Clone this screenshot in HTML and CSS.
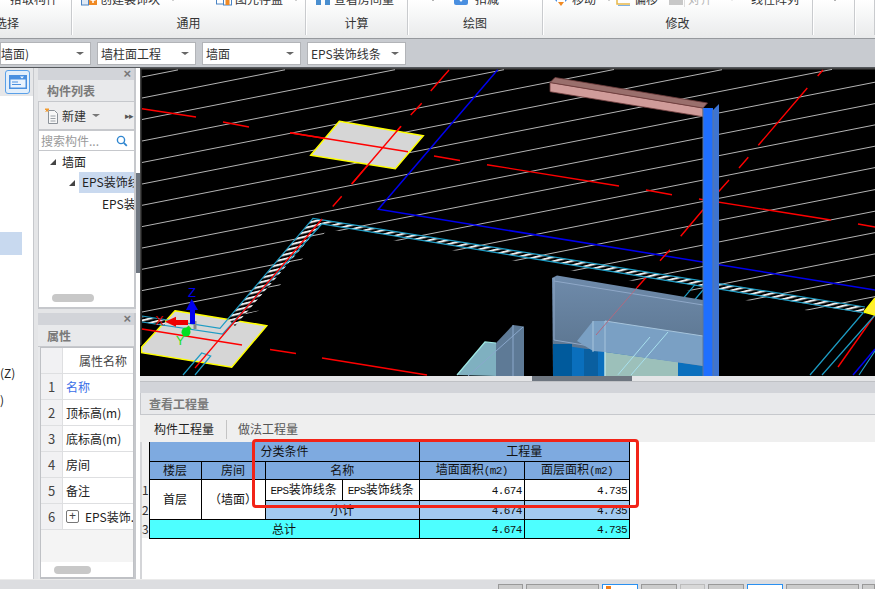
FILE: index.html
```html
<!DOCTYPE html>
<html lang="zh">
<head>
<meta charset="utf-8">
<title>查看工程量</title>
<link rel="stylesheet" href="styles.css">
</head>
<body>
<header class="ribbon">
  <section class="group g-select">
    <div class="items"><span class="item pad-10">拾取构件</span></div>
    <div class="label label-select">选择</div>
  </section>
  <section class="group g-common">
    <div class="items">
      <span class="item w-135">
        <svg class="ico" viewBox="0 0 16 16"><rect x="0.5" y="4" width="7" height="10" fill="#dfe9f5" stroke="#4a84c4"/><rect x="8" y="4" width="8" height="10" fill="#f08a24"/><path d="M12 6v6M9.500 9h5" stroke="#fff" stroke-width="1.500"/></svg>创建装饰块<i class="tiny"></i>
      </span>
      <span class="item">
        <svg class="ico" viewBox="0 0 16 16"><rect x="0.500" y="4" width="8" height="9" fill="#fff" stroke="#4a84c4"/><rect x="7.500" y="3" width="8" height="11" fill="#fff" stroke="#4a84c4"/><rect x="9.500" y="9" width="4" height="5" fill="#f08a24"/></svg>图元存盘<i class="tiny"></i>
      </span>
    </div>
    <div class="label">通用</div>
  </section>
  <section class="group g-calc">
    <div class="items">
      <span class="item">
        <svg class="ico" viewBox="0 0 16 16"><path d="M1 2h14v12h-5v-5H6v5H1z" fill="#4a8fd0"/></svg>查看房间量
      </span>
    </div>
    <div class="label">计算</div>
  </section>
  <section class="group g-draw">
    <div class="items">
      <i class="tiny tiny-draw"></i>
      <span class="item">
        <svg class="ico ico-wide" viewBox="0 0 14 16"><rect x="0" y="0" width="14" height="14" rx="2" fill="#4a8fe0"/><path d="M3 6h8l-4 5z" fill="#fff"/></svg>扣减
      </span>
    </div>
    <div class="label">绘图</div>
  </section>
  <section class="group g-modify">
    <div class="items">
      <span class="item w-62">
        <svg class="ico" viewBox="0 0 16 16"><path d="M1 8l3-3v6zM15 8l-3-3v6z" fill="#4a8fe0"/><path d="M8 15l-3-4h6z" fill="#f08a24"/></svg>移动<i class="tiny"></i>
      </span>
      <span class="item w-54">
        <svg class="ico" viewBox="0 0 16 16"><path d="M2 3v10h13" fill="none" stroke="#e8b84a" stroke-width="1.500"/><path d="M3 14.500h12" stroke="#7fb0e0"/></svg>偏移
      </span>
      <span class="item w-82 off">
        <svg class="ico" viewBox="0 0 16 16"><rect x="0" y="3" width="14" height="11" fill="#c8c8c8"/><path d="M15.500 0v16" stroke="#ddd"/></svg>对齐<i class="tiny tiny-off"></i>
      </span>
      <span class="item">线性阵列</span>
    </div>
    <div class="label">修改</div>
  </section>
  <section class="group g-more">
    <div class="items"><i class="tiny tiny-more"></i></div>
  </section>
  <section class="group g-tail"></section>
</header>

<div class="combobar">
  <div class="combo c-first"><span>墙面)</span><i class="caret"></i></div>
  <div class="combo"><span>墙柱面工程</span><i class="caret"></i></div>
  <div class="combo"><span>墙面</span><i class="caret"></i></div>
  <div class="combo"><span>EPS装饰线条</span><i class="caret"></i></div>
</div>

<main class="workspace">
  <aside class="strip">
    <div class="strip-top">
      <span class="strip-btn">
        <svg viewBox="0 0 18 14" width="18" height="14"><rect width="18" height="14" fill="#4a90e0"/><rect x="1.500" y="4.500" width="15" height="8" fill="#eaf3fd"/><path d="M11 1.500h4l-2 2z" fill="#fff"/><path d="M3 7h6M3 9.500h9" stroke="#4a90e0"/></svg>
      </span>
    </div>
    <div class="strip-body">
      <div class="strip-sel"></div>
      <div class="strip-z">(Z)</div>
      <div class="strip-p">)</div>
    </div>
  </aside>

  <div class="panels">
    <section class="panel p-list">
      <div class="panel-cap"><span class="close">×</span></div>
      <h2 class="panel-title">构件列表</h2>
      <div class="list-tools">
        <svg class="doc" viewBox="0 0 14 16" width="14" height="16"><path d="M3.500 2.500h6l3 3v10h-9z" fill="#f7f7f7" stroke="#8c9299"/><path d="M5.500 8h5M5.500 10.500h5M5.500 13h5" stroke="#9aa0a6"/><path d="M0 1.500h4M2 0v4M.5.500l3 3M3.500.500l-3 3" stroke="#f29a2e"/></svg>
        <span class="new">新建</span><i class="caret caret-new"></i>
        <span class="more">▸▸</span>
      </div>
      <div class="search">
        <span class="ph">搜索构件...</span>
        <svg viewBox="0 0 12 12" width="12" height="12"><circle cx="5" cy="5" r="3.600" fill="none" stroke="#2f86d0" stroke-width="1.400"/><path d="M7.800 7.800l3 3" stroke="#2f86d0" stroke-width="1.800"/></svg>
      </div>
      <div class="tree">
        <div class="node n1"><i class="tri"></i>墙面</div>
        <div class="node n2"><i class="tri"></i><span class="node-sel">EPS装饰线条</span></div>
        <div class="node n3">EPS装饰线条</div>
        <div class="hscroll hs-tree"></div>
      </div>
    </section>
    <section class="panel p-props">
      <div class="panel-cap"><span class="close">×</span></div>
      <h2 class="panel-title">属性</h2>
      <div class="props">
        <div class="pr pr-head"><span class="pn"></span><span class="pv pv-head">属性名称</span></div>
        <div class="pr"><span class="pn">1</span><span class="pv link">名称</span></div>
        <div class="pr"><span class="pn">2</span><span class="pv">顶标高(m)</span></div>
        <div class="pr"><span class="pn">3</span><span class="pv">底标高(m)</span></div>
        <div class="pr"><span class="pn">4</span><span class="pv">房间</span></div>
        <div class="pr"><span class="pn">5</span><span class="pv">备注</span></div>
        <div class="pr"><span class="pn">6</span><span class="pv"><i class="plus">+</i>EPS装饰..</span></div>
        <div class="pr-empty"></div>
        <div class="hscroll hs-props"></div>
      </div>
    </section>
  </div>

  <div class="vsplit"><i class="vsplit-bar"></i></div>

  <div class="main">
    <div class="viewport">
      <svg class="scene" viewBox="140 68 735 308" width="735" height="308">
        <defs>
          <pattern id="hatch" patternUnits="userSpaceOnUse" width="40" height="4.200" patternTransform="rotate(-14)">
            <rect width="40" height="4.200" fill="#000"/>
            <rect width="40" height="2" fill="#eee"/>
          </pattern>
          <linearGradient id="wallg" x1="0" y1="0" x2="0" y2="1">
            <stop offset="0" stop-color="#6f8bab"/>
            <stop offset="1" stop-color="#566f88"/>
          </linearGradient>
        </defs>
        <rect x="140" y="68" width="735" height="308" fill="#000"/>
        <path d="M140 68h735v1.500H141.500V376H140z" fill="#444"/>
        <g stroke="#b4b4b4" stroke-width="1" fill="none">
          <path d="M142 77l36 -7.100"/>
          <path d="M142 98l143 -28.200"/>
          <path d="M142 119.500l253 -49.800"/>
          <path d="M142 141l362 -71.300"/>
          <path d="M142 162.500l472 -93"/>
          <path d="M142 184l580 -114.300"/>
          <path d="M142 205.300l690 -135.900"/>
          <path d="M142 226.600l733 -144.400"/>
          <path d="M142 248l733 -144.400"/>
          <path d="M142 269.300l733 -144.400"/>
          <path d="M142 290.600l733 -144.400"/>
          <path d="M142 312l733 -144.400"/>
          <path d="M236 315.500l639 -125.900"/>
          <path d="M142 355.600l733 -144.400"/>
          <path d="M142 377l733 -144.400"/>
          <path d="M142 398.300l733 -144.400"/>
          <path d="M142 419.700l733 -144.400"/>
          <path d="M142 441l733 -144.400"/>
        </g>
        <polygon points="258,311 328,229 875,322 875,376 140,376 140,345" fill="#000"/>
        <path d="M497.700 69.700L378.300 209.300L875 290" fill="none" stroke="#0000ee" stroke-width="1.500"/>
        <path d="M853 375L875 349" fill="none" stroke="#0000ee" stroke-width="1.500"/>

        <g fill="none" stroke="#f00" stroke-width="1.400">
          <path d="M449 70L430.700 91M421.700 103.300L410.700 115M401 126.300L351.700 184M341.700 196.300L332.700 206.500"/>
          <path d="M823 70L817.700 76M807.300 88L758.300 145.300M748.300 157.300L739 168M729 180L718.300 192M703 209.700L680.700 236.300M670 249.700L660 260.700M650 273L636.700 288"/>
          <path d="M875 314.700L838 367"/>
          <path d="M142 108.700L196 117M223 122L249 127"/>
          <path d="M290 132.700L408 151.700M434 156L460 160.500M487 164.700L619 186M646 190L672 194.700M699 199L831 220M858 224L875 227"/>
          <path d="M270 349.500L296 353.500M322 358L427 375"/>
        </g>

        <polygon points="339.300,121.300 423.300,135.700 395.300,168.700 310.700,155.300" fill="#d6d6d6" stroke="#ff0" stroke-width="1.500"/>
        <path d="M290 132.700L408 151.700M401 126.300L351.700 184" fill="none" stroke="#f00" stroke-width="1.400"/>
        <polygon points="175,310.700 266.700,325.700 231.700,367.300 141.700,352.700 141.700,347" fill="#d6d6d6" stroke="#ff0" stroke-width="1.500"/>
        <path d="M142 329L242 345" fill="none" stroke="#f00" stroke-width="1.400"/>

        <polygon points="142,316.500 165,320.500 165,326 142,322" fill="url(#hatch)"/>
        <polygon points="228,319 313,218.300 865,307 863,313 322,224 235,326" fill="url(#hatch)"/>
        <g fill="none" stroke="#1d9cc4" stroke-width="1.200">
          <path d="M142 316L220 328.300L313 218.300L865 307"/>
          <path d="M142 322L222.700 334L321.700 224L865 313"/>
          <path d="M183 375L201.700 353L210.700 356L195 375"/>
          <path d="M695 284.700L618 374.700M703 290L631 375M863 313L810 375M875 315L822 375M875 351L859 375"/>
        </g>
        <path d="M322 219L195 368" fill="none" stroke="#f00" stroke-width="1.300"/>

        <polygon points="864,312 875,298 875,315" fill="#ffee33"/>
        <path d="M864 312L875 298M864 312L875 315" stroke="#ff0" stroke-width="1.500" fill="none"/>

        <polygon points="552,278 557,275.500 703,300 703,376 553,376" fill="url(#wallg)"/>
        <path d="M554 281L703 305M554 340L703 365M554 278V340" fill="none" stroke="#8fa8c8" stroke-width="1"/>
        <polygon points="553,344 703,366 703,376 553,376" fill="#0a6fbd"/>
        <rect x="553" y="344" width="19" height="32" fill="#005a9c"/>
        <rect x="584" y="349" width="14" height="27" fill="#0a5fa0"/>
        <polygon points="605,352 678,362 678,376 605,376" fill="#9cc0ba"/>
        <polygon points="577,341 593,321 605,321 703,336 703,366 605,352 593,351" fill="#7aa0c4"/>
        <path d="M605 321V376M605 321L703 336M593 321V352" fill="none" stroke="#a6c4dc" stroke-width="1"/>
        <path d="M605 352V376" stroke="#c8f0e8" stroke-width="1"/>
        <path d="M636.700 288L596 335" stroke="#b06a80" stroke-width="1" fill="none"/>
        <path d="M618 374.700L650 337M631 375L668 332" stroke="#a8e0ee" stroke-width="1" fill="none"/>
        <polygon points="457,375 485,342 496,343 496,376" fill="#7fb0c0"/>
        <path d="M457 375L485 342L496 343" fill="none" stroke="#9ee8e4" stroke-width="1.200"/>
        <polygon points="496,343 513,325 524,326.500 524,376 496,376" fill="#5e7a96"/>
        <path d="M468 376L523 327M513 325V376" fill="none" stroke="#8aa8cc" stroke-width="1"/>

        <polygon points="550,82.500 703,108 703,116.700 550,91.700" fill="#d09c9a" stroke="#6e3c3c" stroke-width="0.800"/>
        <polygon points="550,82.500 555,77.500 707.500,103 703,108" fill="#9a6f6c" stroke="#6e3c3c" stroke-width="0.800"/>
        <rect x="703" y="108" width="10" height="268" fill="#1f6fff"/>
        <polygon points="713,110 719,104 719,376 713,376" fill="#3e74d0"/>
        <path d="M703 108V376M713 110V376" stroke="#5f7698" stroke-width="1" fill="none"/>

        <rect x="193.500" y="321" width="3" height="8" fill="#888"/>
        <rect x="190" y="310" width="5" height="14" fill="#00e"/>
        <polygon points="191.700,299 198,310 186,310" fill="#00e"/>
        <rect x="176" y="320" width="12" height="5" fill="#e00"/>
        <polygon points="165,321.700 176,316.700 176,326.700" fill="#e00"/>
        <path d="M183 334L190 327" stroke="#1ed81e" stroke-width="4" fill="none"/>
        <circle cx="186" cy="332" r="4.500" fill="#00e020"/>
        <text class="axis" x="188" y="297" fill="#0000ee">Z</text>
        <text class="axis" x="155" y="325" fill="#e00000">X</text>
        <text class="axis" x="176" y="345" fill="#22e022">Y</text>
      </svg>
    </div>
    <div class="hsplit"><i class="hsplit-bar"></i></div>
    <section class="qty">
      <div class="panel-cap cap-qty"></div>
      <h2 class="panel-title qty-title">查看工程量</h2>
      <nav class="tabs">
        <span class="tab tab-on">构件工程量</span>
        <span class="tab-sep"></span>
        <span class="tab">做法工程量</span>
      </nav>
      <div class="sheet">
        <table class="grid">
          <colgroup>
            <col class="c0"><col class="c1"><col class="c2"><col class="c3"><col class="c4"><col class="c5"><col class="c5">
          </colgroup>
          <tbody>
            <tr class="r-h1">
              <th class="rh"></th>
              <th class="hd hd-left" colspan="4"><span>分类条件</span></th>
              <th class="hd" colspan="2">工程量</th>
            </tr>
            <tr class="r-h2">
              <th class="rh"></th>
              <th class="hd">楼层</th>
              <th class="hd">房间</th>
              <th class="hd" colspan="2">名称</th>
              <th class="hd"><span class="cj">墙面面积</span><span class="mono">(m2)</span></th>
              <th class="hd"><span class="cj">面层面积</span><span class="mono">(m2)</span></th>
            </tr>
            <tr class="r-1">
              <th class="rh">1</th>
              <td class="ctr" rowspan="2">首层</td>
              <td class="ctr" rowspan="2">（墙面）</td>
              <td class="ctr"><span class="mono">EPS</span>装饰线条</td>
              <td class="ctr"><span class="mono">EPS</span>装饰线条</td>
              <td class="num"><span class="mono">4.674</span></td>
              <td class="num"><span class="mono">4.735</span></td>
            </tr>
            <tr class="r-2">
              <th class="rh">2</th>
              <td class="sub ctr" colspan="2">小计</td>
              <td class="sub num"><span class="mono">4.674</span></td>
              <td class="sub num"><span class="mono">4.735</span></td>
            </tr>
            <tr class="r-3">
              <th class="rh">3</th>
              <td class="tot ctr" colspan="4">总计</td>
              <td class="tot num"><span class="mono">4.674</span></td>
              <td class="tot num"><span class="mono">4.735</span></td>
            </tr>
          </tbody>
        </table>
        <div class="mark"></div>
      </div>
    </section>
  </div>
</main>

<footer class="status">
  <span class="sb w25"></span>
  <span class="sb w72"></span>
  <span class="sb w36 on"><i class="sb-dot"></i></span>
  <span class="sb w36"></span>
  <span class="sb w25 dim"></span>
  <span class="sb w36"></span>
  <span class="sb w36 on"></span>
  <span class="sb w72"></span>
  <span class="sb w13"></span>
</footer>
</body>
</html>
```
FILE: styles.css
```css
* { box-sizing: border-box; }
html, body { margin: 0; padding: 0; }
body {
  width: 875px;
  height: 589px;
  overflow: hidden;
  display: flex;
  flex-direction: column;
  background: #e4e5e7;
  color: #222;
  font: 12px/16px "Noto Sans CJK SC", "Liberation Sans", sans-serif;
}
i { font-style: normal; }
h2 { margin: 0; font-weight: 400; }

/* ribbon */
.ribbon {
  flex: 0 0 39px;
  display: flex;
  overflow: hidden;
  background: linear-gradient(#fff, #f6f7f7 40%, #e9eaeb);
  border-bottom: 1px solid #96999d;
}
.group {
  height: 35px;
  display: flex;
  flex-direction: column;
  border-right: 1px solid #c9cbce;
  box-shadow: 1px 0 0 #fff;
}
.g-select { width: 72px; }
.g-common { width: 234px; padding-left: 9px; }
.g-calc { width: 102px; padding-left: 9px; }
.g-draw { width: 135px; padding-left: 21px; }
.g-modify { width: 270px; padding-left: 10px; }
.g-more { width: 42px; }
.g-tail { width: 20px; }
.items {
  display: flex;
  align-items: center;
  height: 16px;
  margin-top: -9px;
  color: #333;
  white-space: nowrap;
}
.item { display: flex; align-items: center; }
.pad-10 { padding-left: 10px; }
.w-135 { width: 135px; }
.w-62 { width: 62px; }
.w-54 { width: 54px; }
.w-82 { width: 82px; }
.off { color: #b8b8b8; }
.ico { width: 16px; height: 16px; margin-right: 3px; flex: none; }
.ico-wide { width: 14px; margin-right: 7px; }
.tiny {
  width: 0;
  height: 0;
  margin-left: 11px;
  border: 2px solid transparent;
  border-top: 3px solid #777;
  border-bottom: 0;
}
.tiny-draw { margin-left: 0; margin-right: 17px; border-width: 4px 4px 0; border-top-color: #666; border-style: solid; border-left-color: transparent; border-right-color: transparent; }
.tiny-more { margin-left: 18px; border-width: 4px 4px 0; border-top-color: #666; }
.tiny-off { margin-left: 18px; border-top-color: #ccc; }
.label { margin-top: 8px; text-align: center; color: #333; }
.label-select { text-align: left; margin-left: -5px; }
.g-common .label { margin-left: -9px; }
.g-calc .label { margin-left: -9px; }
.g-draw .label { margin-left: -21px; }
.g-modify .label { margin-left: -10px; }

/* combos */
.combobar {
  flex: 0 0 29px;
  display: flex;
  gap: 6px;
  padding-top: 3px;
  background: #c8cbd0;
  border-bottom: 1px solid #55585c;
}
.combo {
  width: 99px;
  height: 23px;
  display: flex;
  align-items: center;
  justify-content: space-between;
  padding: 0 6px 0 3px;
  background: #fff;
  border: 1px solid #b2b4b8;
  color: #333;
  white-space: nowrap;
}
.c-first { width: 91px; padding-left: 0; }
.caret {
  width: 0;
  height: 0;
  border-style: solid;
  border-width: 3px 4px 0;
  border-color: #666 transparent transparent;
}

/* workspace */
.workspace { flex: 0 0 511px; display: flex; }
.strip {
  width: 34px;
  margin-right: 4px;
  display: flex;
  flex-direction: column;
  border-right: 1px solid #c6c8cc;
  background: #fff;
}
.strip-top {
  height: 28px;
  padding: 2px 0 0 5px;
  background: #e6e7e9;
}
.strip-btn {
  width: 25px;
  height: 24px;
  display: flex;
  align-items: center;
  justify-content: center;
  border: 1px solid #5aa0e8;
  border-radius: 3px;
  background: #e3effb;
}
.strip-body { flex: 1; padding-top: 136px; }
.strip-sel { width: 22px; height: 23px; background: #c8d9ef; }
.strip-z { margin-top: 110px; height: 16px; }
.strip-p { margin-top: 11px; height: 16px; }

.panels { width: 98px; display: flex; flex-direction: column; gap: 4px; }
.panel { display: flex; flex-direction: column; background: #e8e9eb; border-right: 2px solid #c6c8cc; }
.p-list { height: 241px; }
.p-props { flex: 1; }
.panel-cap {
  height: 12px;
  background: #d2d4d9;
  display: flex;
  justify-content: flex-end;
  padding-right: 3px;
}
.close { font: 700 13px/12px "Liberation Sans", sans-serif; color: #777; }
.panel-title {
  height: 22px;
  padding-left: 9px;
  font-size: 12px;
  line-height: 21px;
  color: #7a7a7a;
  font-weight: 700;
  border-bottom: 1px solid #c6c8cc;
  letter-spacing: 0;
}
.list-tools {
  height: 29px;
  display: flex;
  align-items: center;
  padding-left: 6px;
  background: #ededee;
  border-bottom: 2px solid #c6c8cc;
  border-left: 1px solid #c6c8cc;
}
.doc { margin-right: 3px; }
.new { color: #333; margin-right: 6px; }
.caret-new { border-color: #777 transparent transparent; }
.more { margin-left: auto; font-size: 9px; color: #555; letter-spacing: -1px; margin-right: 1px; }
.search {
  height: 20px;
  display: flex;
  align-items: center;
  justify-content: space-between;
  padding: 0 6px 0 2px;
  background: #fff;
  border-bottom: 1px solid #c6c8cc;
  border-left: 1px solid #c6c8cc;
}
.ph { color: #9a9a9a; }
.tree {
  flex: 1;
  position: relative;
  background: #fff;
  overflow: hidden;
  border-left: 1px solid #c6c8cc;
  border-bottom: 2px solid #c6c8cc;
}
.node { height: 21px; line-height: 20px; white-space: nowrap; display: flex; align-items: center; color: #222; }
.n1 { padding-left: 11px; }
.n2 { padding-left: 30px; }
.n3 { padding-left: 63px; }
.tri {
  width: 0;
  height: 0;
  flex: none;
  margin-right: 6px;
  border-style: solid;
  border-width: 0 0 6px 6px;
  border-color: transparent transparent #444;
}
.n2 .tri { margin-right: 4px; }
.node-sel { background: #c9d9ef; padding-left: 3px; flex: 1; overflow: hidden; height: 21px; }
.hscroll { position: absolute; height: 8px; border-radius: 4px; background: #c8c8c8; }
.hs-tree { left: 13px; width: 42px; bottom: 5px; }

.props {
  flex: 1;
  position: relative;
  margin: 0 0 0 2px;
  background: #fff;
  border: 1px solid #bfc1c5;
  border-bottom-width: 2px;
  width: 94px;
}
.pr { display: flex; height: 26px; border-bottom: 1px solid #dedfe1; }
.pn {
  width: 22px;
  flex: none;
  text-align: center;
  line-height: 26px;
  font-size: 13px;
  color: #444;
  background: #f1f1f3;
  border-right: 1px solid #dedfe1;
}
.pv { padding-left: 3px; line-height: 25px; white-space: nowrap; overflow: hidden; color: #222; display: flex; align-items: center; }
.pv-head { padding-left: 16px; color: #444; }
.link { color: #3a6fe8; }
.plus {
  width: 13px;
  height: 13px;
  flex: none;
  margin: 0 6px 0 0;
  border: 1px solid #777;
  border-radius: 2px;
  font: 12px/11px "Liberation Sans", sans-serif;
  text-align: center;
  color: #444;
}
.pr-empty { height: 32px; background: #f4f4f4; }
.hs-props { left: 13px; width: 37px; bottom: 3px; }

.vsplit { width: 4px; display: flex; align-items: flex-start; background: #fff; }
.vsplit-bar { display: block; width: 4px; height: 100px; margin-top: 105px; background: #6e7680; }

.main { width: 735px; display: flex; flex-direction: column; }
.viewport { height: 308px; background: #000; }
.scene { display: block; }
.axis { font: 13px "Liberation Sans", sans-serif; }
.hsplit { height: 5px; padding-left: 392px; background: #e4e5e7; }
.hsplit-bar { display: block; width: 100px; height: 5px; background: #6e7680; }

.qty { flex: 1; display: flex; flex-direction: column; border-top: 1px solid #bfc1c5; min-height: 0; }
.cap-qty { height: 11px; }
.qty-title { padding-left: 8px; font-size: 12px; background: #e8e9eb; border-left: 1px solid #c6c8cc; }
.tabs {
  height: 27px;
  display: flex;
  align-items: center;
  padding: 1px 0 0 14px;
  background: #efefef;
  color: #555;
}
.tab-on { color: #222; }
.tab-sep { width: 1px; height: 19px; margin: 0 11px 0 12px; background: #c4c4c4; }
.sheet { flex: 1; position: relative; background: #fff; border-left: 2px solid #d4d5d8; }
.grid {
  table-layout: fixed;
  width: 488px;
  border-collapse: collapse;
  font-size: 12px;
  line-height: 14px;
  color: #111;
}
.c0 { width: 7px; }
.c1 { width: 52px; }
.c2 { width: 64px; }
.c3 { width: 77px; }
.c4 { width: 77px; }
.c5 { width: 105px; }
.grid th, .grid td { padding: 0; font-weight: 400; white-space: nowrap; }
.r-h1 { height: 19px; }
.r-h2 { height: 18px; }
.r-1 { height: 21px; }
.r-2 { height: 19px; }
.r-3 { height: 19px; }
.rh { background: #f0f0f0; border: 0; text-align: center; font-size: 12px; color: #333; overflow: visible; }
.hd { background: #7eaae0; border: 1px solid #000; text-align: center; }
.hd-left { text-align: left; }
.hd-left span { margin-left: 111px; }
.r-h1 .hd { border-top: 0; }
.r-1 td, .r-2 td, .r-3 td { border: 1px solid #000; }
.ctr { text-align: center; }
.num { text-align: right; padding-right: 2px !important; }
.sub { background: #a2caf0; }
.tot { background: #4dffff; }
.mono { font-family: "Liberation Mono", monospace; font-size: 11px; letter-spacing: -0.6px; }
.mark {
  position: absolute;
  left: 110px;
  top: -3px;
  width: 387px;
  height: 69px;
  border: 3px solid #f22418;
  border-radius: 4px;
}

/* status */
.status {
  flex: 0 0 10px;
  display: flex;
  justify-content: flex-start;
  gap: 3px;
  padding: 5px 0 0 498px;
  overflow: hidden;
  background: linear-gradient(#ebebeb 1px, #dcdde0 1px);
}
.sb { flex: none; height: 12px; background: #ccc; border: 1px solid #999; position: relative; }
.w25 { width: 25px; }
.w72 { width: 73px; }
.w36 { width: 36px; }
.w13 { width: 13px; }
.on { background: #fff; border-color: #2a90f0; }
.dim { background: #d8d8d8; border-color: #bbb; }
.sb-dot { display: block; width: 5px; height: 4px; margin: 1px 0 0 3px; background: #f07d1a; }
```
